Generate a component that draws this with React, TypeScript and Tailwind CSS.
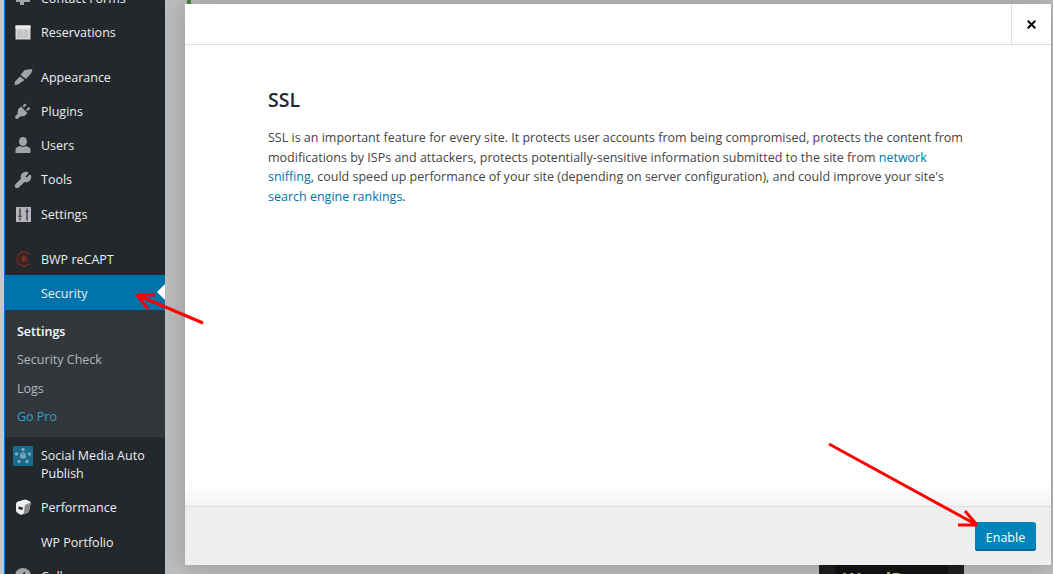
import type { ReactNode } from "react";
import { Wrench, X } from "lucide-react";

const grey = "#a0a5aa";

// Hand drawn menu icons, the stock ones don't match these plugin glyphs
const ReservationsIcon = () => (
  <svg width="16" height="15" viewBox="0 0 16 15">
    <rect x="0.5" y="0.5" width="15" height="14" fill="#d8d8d8" />
    <rect x="0.5" y="0.5" width="15" height="3" fill="#eee" />
    <path d="M2.5 6h11M2.5 8h11M2.5 10h11M2.5 12h11" stroke="#999" strokeWidth="0.8" strokeDasharray="1.5 0.7" />
  </svg>
);

const FormsIcon = () => (
  <svg width="16" height="16" viewBox="0 0 16 16" fill={grey}>
    <rect x="1" y="1" width="14" height="11" />
    <path d="M5 12h4v3H5Z" />
  </svg>
);

const BrushIcon = () => (
  <svg width="19" height="16" viewBox="0 0 19 16" fill={grey}>
    <path d="M6.5 6 10.5 1 18.5 0 17.5 3.5 16.5 5 12 10Z" />
    <path d="M6 7.5 10.5 11 4 15.5 0.5 16 1 12.5Z" />
  </svg>
);

const PlugIcon = () => (
  <svg width="16" height="16" viewBox="0 0 16 16" fill={grey}>
    <path d="M6 3.5 12.5 10 9.5 13 5 13.5 2.5 16 0.5 15.5 0 13.5 2.5 11 3 6.5Z" />
    <path d="M7.5 3 10 0.5 11.5 2 9 4.5Z" />
    <path d="M11 6.5 13.8 4 15.3 5.5 12.5 8Z" />
  </svg>
);

const UserIcon = () => (
  <svg width="16" height="16" viewBox="0 0 16 16" fill={grey}>
    <ellipse cx="8" cy="4.5" rx="4" ry="4.5" />
    <path d="M0.5 16V12.5C0.5 10.5 3 9.5 5.5 9 6.5 10.2 9.5 10.2 10.5 9 13 9.5 15.5 10.5 15.5 12.5V16Z" />
  </svg>
);

const SettingsIcon = () => (
  <svg width="15" height="15" viewBox="0 0 15 15">
    <rect width="15" height="15" fill="#b4b6b8" />
    <path d="M4 1.5v8M4 11v2.5M2.5 9.5h3M11 1.5v2M11 5.5v8M9.5 4.5h3" stroke="#3b2a52" strokeWidth="1.3" />
  </svg>
);

const RecaptchaIcon = () => (
  <svg width="16" height="16" viewBox="0 0 16 16" fill="none">
    <path d="M14.5 3.5A7 7 0 1 0 14.5 12.5" stroke="#6d2a20" strokeWidth="1.8" />
    <circle cx="9" cy="8" r="3.5" fill="#4a2420" stroke="#6d2a20" />
    <path d="M8 10V6h1.5a1 1 0 0 1 0 2H8l2 2" stroke="#a8483a" strokeWidth="0.7" />
  </svg>
);

const SocialIcon = () => (
  <svg width="20" height="20" viewBox="0 0 20 20">
    <rect width="20" height="20" fill="#1a6c8c" />
    <g fill="#7fa6b8">
      <circle cx="10" cy="3.5" r="1.7" />
      <circle cx="3.5" cy="8" r="1.7" />
      <circle cx="16.5" cy="8" r="1.7" />
      <circle cx="6" cy="15.5" r="1.7" />
      <circle cx="14" cy="15.5" r="1.7" />
      <circle cx="8" cy="8" r="1" />
      <circle cx="12" cy="8" r="1" />
      <circle cx="10" cy="7" r="1" />
      <ellipse cx="10" cy="10.5" rx="3" ry="2" />
    </g>
  </svg>
);

const PerformanceIcon = () => (
  <svg width="16" height="16" viewBox="0 0 16 16">
    <path d="M1 5Q1 3 3 2.5L10 0.5Q11 0.5 12 1L15 2.5Q16 3 15.5 5L14 12Q13.5 13.5 12 14L7 15.5Q6 16 5 15.5L2 13.5Q1 13 1 11Z" fill="#eee" />
    <path d="M10 6 15.5 3.5 14 12Q13.5 13.5 12 14L8.5 15.5Z" fill="#8a8a8a" />
    <path d="M3.5 7.5 8 8.5 7.5 11 3.5 10Z" fill="#23282d" />
  </svg>
);

const CollapseIcon = () => (
  <svg width="16" height="16" viewBox="0 0 16 16">
    <circle cx="8" cy="8" r="8" fill={grey} />
    <path d="M10 3.5 5 8l5 4.5Z" fill="#23282d" />
  </svg>
);

const MenuRow = ({
  label,
  icon,
  className = "h-[34px]",
  textClass = "pt-[2px]",
}: {
  label: string;
  icon?: ReactNode;
  className?: string;
  textClass?: string;
}) => (
  <div className={`flex items-center shrink-0 ${className}`}>
    <div className="w-9 flex justify-center shrink-0">{icon}</div>
    <span className={`text-[12.5px] text-[#eee] ${textClass}`}>{label}</span>
  </div>
);

export default function App() {
  return (
    <div className="relative w-[1053px] h-[574px] overflow-hidden flex bg-[#bdbdbd] font-['Open_Sans','Noto_Sans',sans-serif]">
      {/* page behind the overlay */}
      <div className="absolute left-[187px] top-0 w-1 h-1 bg-[#3c8c3c]" />
      <div className="absolute left-[819px] top-[560px] w-[145px] h-[20px] bg-[#1c1e20] flex justify-center">
        <div className="w-[113px] h-full bg-[#131313] pl-2 pt-[6px] text-[18px] leading-[26px] font-bold text-[#c4c43c]">WordP</div>
      </div>

      {/* Sidebar */}
      <div className="w-[4px] bg-[#c6c6c6] shrink-0" />
      <div className="w-[1px] bg-[#0a78d0] shrink-0" />
      <div className="relative w-[160px] h-full shrink-0 bg-[#23282d] flex flex-col">
        <MenuRow label="Contact Forms" className="h-[34px] -mt-[19px]" icon={<FormsIcon />} />
        <MenuRow label="Reservations" icon={<ReservationsIcon />} />
        <div className="h-[11px] shrink-0" />
        <MenuRow label="Appearance" icon={<BrushIcon />} />
        <MenuRow label="Plugins" icon={<PlugIcon />} />
        <MenuRow label="Users" icon={<UserIcon />} />
        <MenuRow label="Tools" className="h-[35px]" icon={<Wrench size={18} fill={grey} color={grey} />} />
        <MenuRow label="Settings" icon={<SettingsIcon />} />
        <div className="h-[12px] shrink-0" />
        <MenuRow label="BWP reCAPT" className="h-[32px]" icon={<RecaptchaIcon />} />
        <div className="relative shrink-0">
          <MenuRow label="Security" className="h-[35px] bg-[#0073aa]" textClass="pt-[4px]" />
          <div className="absolute right-0 top-[9px] border-y-[8px] border-r-[8px] border-y-transparent border-r-white" />
        </div>
        <div className="bg-[#32373c] flex flex-col shrink-0 py-[7px] text-[12.5px]">
          <div className="pl-3 pt-[2px] h-[28px] flex items-center font-semibold text-white">Settings</div>
          <div className="pl-3 pt-[2px] h-[28px] flex items-center text-[#b4b9be]">Security Check</div>
          <div className="pl-3 pt-[4px] h-[29px] flex items-center text-[#b4b9be]">Logs</div>
          <div className="pl-3 pt-[2px] h-[28px] flex items-center text-[#2ea2cc]">Go Pro</div>
        </div>
        <div className="flex items-start shrink-0 h-[53px] pt-[9px]">
          <div className="w-9 flex justify-center shrink-0">
            <SocialIcon />
          </div>
          <span className="pt-[1px] text-[12.5px] leading-[18px] text-[#eee]">Social Media Auto Publish</span>
        </div>
        <MenuRow label="Performance" icon={<PerformanceIcon />} />
        <MenuRow label="WP Portfolio" className="h-[35px]" textClass="pt-[4px]" />
        <MenuRow label="Collapse menu" icon={<CollapseIcon />} />
      </div>
      <div className="w-5 shrink-0" />

      {/* Modal */}
      <div className="relative w-[866px] shrink-0 mt-1 mb-[9px] bg-white flex flex-col shadow-[0_0_24px_rgba(0,0,0,0.22)]">
        <div className="h-[41px] shrink-0 flex justify-end border-b border-[#ddd]">
          <div className="w-[40px] border-l border-[#ddd] flex items-center justify-center">
            <X size={13} strokeWidth={3.5} className="text-black" />
          </div>
        </div>
        <div className="flex-1 pl-[83px] pt-[43px] bg-gradient-to-b from-white from-95% to-[#f4f4f4]">
          <h2 className="text-[19.5px] font-semibold text-[#23282d] leading-6 mb-[16px]">SSL</h2>
          <p className="w-[705px] text-[12.5px] leading-[19.5px] text-[#444]">
            SSL is an important feature for every site. It protects user accounts from being compromised, protects the content from
            modifications by ISPs and attackers, protects potentially-sensitive information submitted to the site from{" "}
            <span className="text-[#0073aa]">network sniffing</span>, could speed up performance of your site (depending on server
            configuration), and could improve your site's <span className="text-[#0073aa]">search engine rankings</span>.
          </p>
        </div>
        <div className="h-[59px] shrink-0 bg-[#eee] border-t border-[#ddd] flex items-center justify-end pr-[15px]">
          <div className="h-[29px] w-[61px] pt-[4px] rounded-[3px] bg-[#0085ba] shadow-[inset_0_-2px_0_#006799] text-white text-[12.5px] flex items-center justify-center">
            Enable
          </div>
        </div>
      </div>

      {/* red annotation arrows */}
      <svg className="absolute inset-0 pointer-events-none" width="1053" height="574" fill="none" stroke="#f00" strokeWidth="3">
        <path d="M203 323 137 295M137 295H155M137 295 148 309" />
        <path d="M829 444 977 525M977 525 965 511M977 525H958" />
      </svg>
    </div>
  );
}
